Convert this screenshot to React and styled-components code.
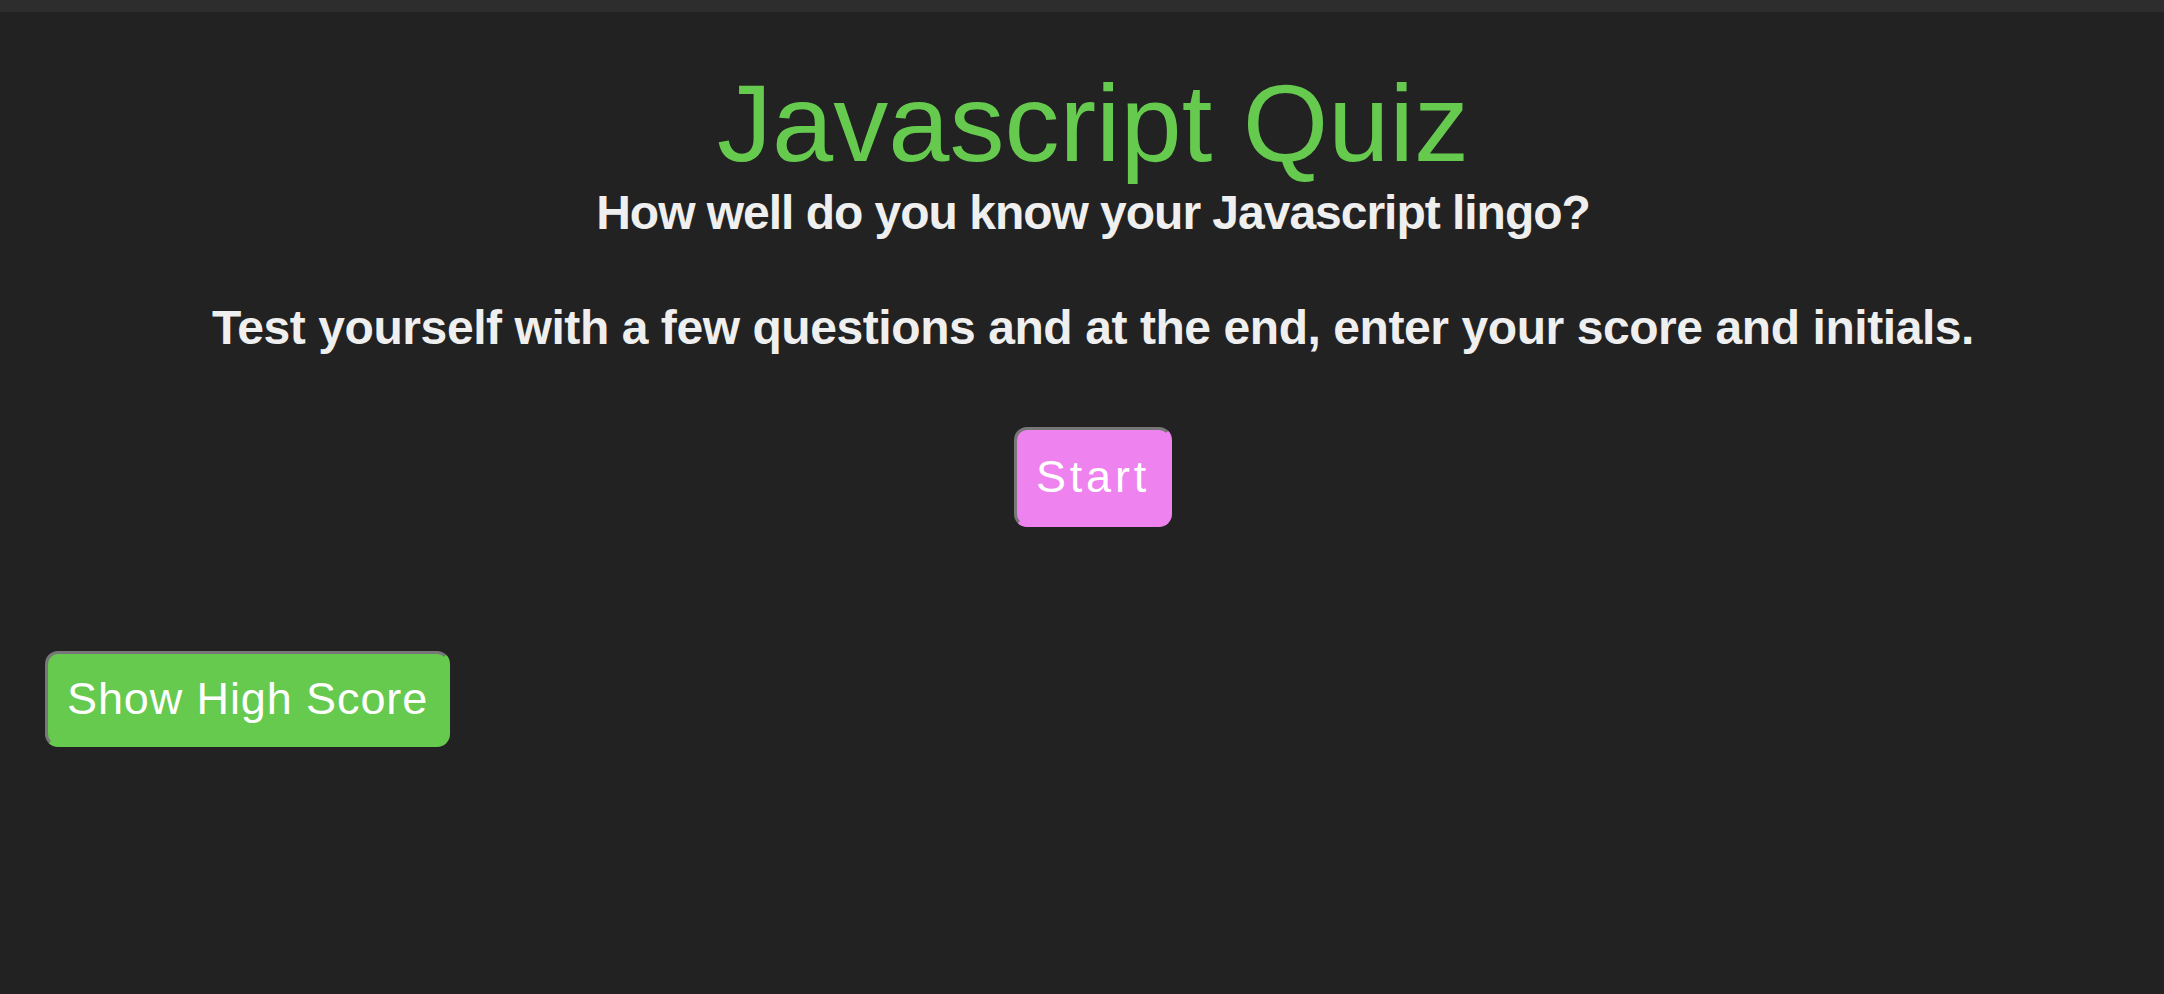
import React from 'react';
import styled, { createGlobalStyle } from 'styled-components';

const GREEN = '#66ca4f';
const PINK = '#ee82ee';

const GlobalStyle = createGlobalStyle`
    html, body {
        margin: 0;
        padding: 0;
        background: #222222;
    }
    body {
        font-family: "Liberation Sans", Arial, sans-serif;
        color: #efefef;
    }
`;

const Page = styled.div`
    min-height: 994px;
    display: flex;
    flex-direction: column;
    background: #222222;
`;

const TopBar = styled.div`
    height: 12px;
    background: #2d2d2d;
    flex-shrink: 0;
`;

// the centred column sits a little right of the page middle in the reference
const Intro = styled.section`
    display: flex;
    flex-direction: column;
    align-items: center;
    text-align: center;
    padding: 57px 0 0 22px;
`;

const Title = styled.h1`
    margin: 0;
    font-size: 110px;
    line-height: 108px;
    font-weight: 400;
    color: ${GREEN};
`;

const Lead = styled.h2`
    margin: ${p => p.$gap}px 0 0;
    font-size: 48px;
    line-height: 57.6px;
    font-weight: 700;
    letter-spacing: ${p => p.$tracking}px;
    color: #efefef;
`;

const Button = styled.button`
    font-family: "Liberation Sans", Arial, sans-serif;
    font-size: 45px;
    line-height: 52px;
    font-weight: 400;
    letter-spacing: ${p => p.$tracking}px;
    color: #ffffff;
    background: ${p => p.$bg};
    border: 3px solid;
    border-color: #777777 ${p => p.$bg} ${p => p.$bg} #777777;
    border-radius: 13px;
    padding: ${p => p.$padY}px ${p => p.$padX}px;
    cursor: pointer;
`;

const StartRow = styled.div`
    margin-top: 71px;
    padding-left: 22px;
    display: flex;
    justify-content: center;
`;

const ScoreRow = styled.div`
    margin-top: 124px;
    padding-left: 45px;
    display: flex;
`;

export default function App() {
    return (
        <Page>
            <GlobalStyle />
            <TopBar />
            <Intro>
                <Title>Javascript Quiz</Title>
                <Lead $gap={7} $tracking={-1.02}>How well do you know your Javascript lingo?</Lead>
                <Lead $gap={57} $tracking={-0.43}>
                    Test yourself with a few questions and at the end, enter your score and initials.
                </Lead>
            </Intro>
            <StartRow>
                <Button $bg={PINK} $tracking={3.8} $padY={21} $padX={18.5}>Start</Button>
            </StartRow>
            <ScoreRow>
                <Button $bg={GREEN} $tracking={0.9} $padY={19} $padX={19}>Show High Score</Button>
            </ScoreRow>
        </Page>
    );
}
